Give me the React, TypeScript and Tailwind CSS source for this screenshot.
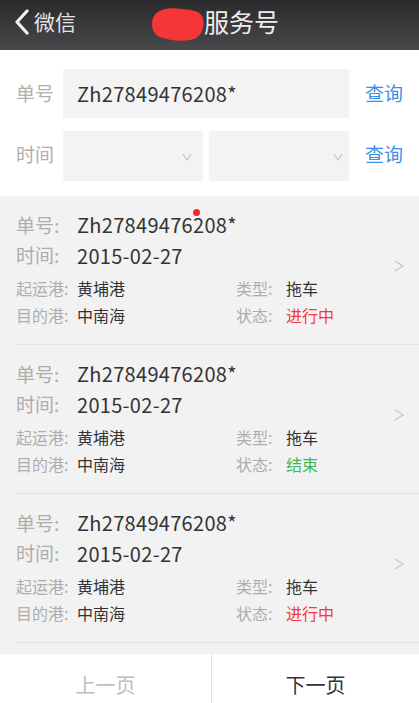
import React from "react";

const FONT = { fontFamily: '"Noto Sans CJK SC", "Noto Sans", sans-serif' };

type Item = { status: string; color: string; dot?: boolean };

const items: Item[] = [
  { status: "进行中", color: "text-[#f53a3a]", dot: true },
  { status: "结束", color: "text-[#3cb84f]" },
  { status: "进行中", color: "text-[#f53a3a]" },
];

function Card({ item }: { item: Item }) {
  return (
    <div className="relative pl-4 pr-4">
      <div className="pt-[14px] pb-[16px]">
        <div className="flex h-[30px] items-center">
          <span className="w-[61px] text-[19px] text-[#adadad]">单号:</span>
          <span className="relative text-[20px] tracking-[0.3px] text-[#333]">
            Zh27849476208*
            {item.dot && (
              <span className="absolute left-[116px] top-[-1px] h-[7px] w-[7px] rounded-full bg-[#f02828]" />
            )}
          </span>
        </div>
        <div className="flex h-[31px] items-center">
          <span className="w-[61px] text-[19px] text-[#adadad]">时间:</span>
          <span className="text-[20px] tracking-[0.3px] text-[#333]">2015-02-27</span>
        </div>
        <div className="mt-[4px] flex h-[26px] items-center text-[16px]">
          <span className="w-[61px] text-[#adadad]">起运港:</span>
          <span className="w-[159px] text-[#333]">黄埔港</span>
          <span className="w-[50px] text-[#adadad]">类型:</span>
          <span className="text-[#333]">拖车</span>
        </div>
        <div className="flex h-[27px] items-center text-[16px]">
          <span className="w-[61px] text-[#adadad]">目的港:</span>
          <span className="w-[159px] text-[#333]">中南海</span>
          <span className="w-[50px] text-[#adadad]">状态:</span>
          <span className={item.color}>{item.status}</span>
        </div>
      </div>
      <svg
        width="10"
        height="12"
        viewBox="0 0 10 12"
        className="absolute right-[15px] top-[64px]"
      >
        <path d="M1 1 L9 6 L1 11" fill="none" stroke="#c4c4c4" strokeWidth="1.2" />
      </svg>
      <div className="ml-[-2px] mr-[-16px] h-px bg-[#e2e2e2]" />
    </div>
  );
}

function SelectArrow() {
  return (
    <svg width="10" height="8" viewBox="0 0 10 8">
      <path d="M1 1 L5 7 L9 1" fill="none" stroke="#c0c0c0" strokeWidth="1.1" />
    </svg>
  );
}

export default function App() {
  return (
    <div className="flex h-[703px] w-[419px] flex-col overflow-hidden bg-[#f2f2f2]" style={FONT}>
      <div className="relative flex h-[50px] shrink-0 items-center bg-gradient-to-b from-[#2a2a2c] to-[#48494b]">
        <div className="absolute left-[14px] top-0 flex h-[44px] items-center">
          <svg width="16" height="26" viewBox="0 0 16 26" className="mr-[4px]">
            <path d="M13 2 L3 13 L13 24" fill="none" stroke="#f2f2f2" strokeWidth="3.2" strokeLinecap="round" strokeLinejoin="round" />
          </svg>
          <span className="text-[21px] text-[#e4e4e4]">微信</span>
        </div>
        <div className="absolute left-[150px] top-0 flex h-[44px] items-center">
          <svg width="54" height="36" viewBox="0 0 54 36" className="mt-[4px]">
            <path
              d="M4 10 C8 3 20 1 32 3 C42 4 51 5 53 12 C55 20 52 30 44 33 C34 36 20 35 10 31 C2 28 0 18 4 10 Z"
              fill="#f43636"
            />
          </svg>
          <span className="text-[25px] text-[#ededed]">服务号</span>
        </div>
      </div>

      <div className="shrink-0 bg-white pb-[15px] pt-[19px]">
        <div className="flex h-[49px] items-center">
          <span className="w-[63px] pl-4 text-[19px] text-[#b0b0b0]">单号</span>
          <div className="flex h-full w-[286px] items-center bg-[#f3f3f3] pl-[14px] text-[20px] tracking-[0.3px] text-[#333]">
            Zh27849476208*
          </div>
          <span className="ml-[16px] text-[19px] text-[#3a8fe8]">查询</span>
        </div>
        <div className="mt-[13px] flex h-[50px] items-center">
          <span className="w-[63px] pl-4 pb-[4px] text-[19px] text-[#b0b0b0]">时间</span>
          <div className="flex h-full w-[140px] items-center justify-end bg-[#f3f3f3] pr-[11px] pt-[2px]">
            <SelectArrow />
          </div>
          <div className="ml-[6px] flex h-full w-[140px] items-center justify-end bg-[#f3f3f3] pr-[6px] pt-[2px]">
            <SelectArrow />
          </div>
          <span className="ml-[16px] pb-[4px] text-[19px] text-[#3a8fe8]">查询</span>
        </div>
      </div>

      <div className="flex-1 overflow-hidden">
        {items.map((it, i) => (
          <Card key={i} item={it} />
        ))}
      </div>

      <div className="flex h-[49px] shrink-0 bg-white">
        <div className="flex w-[212px] items-center justify-center border-r border-[#e2e2e2] pt-[12px] text-[20px] text-[#bdbdbd]">
          上一页
        </div>
        <div className="flex flex-1 items-center justify-center pt-[12px] text-[20px] text-[#333]">下一页</div>
      </div>
    </div>
  );
}
